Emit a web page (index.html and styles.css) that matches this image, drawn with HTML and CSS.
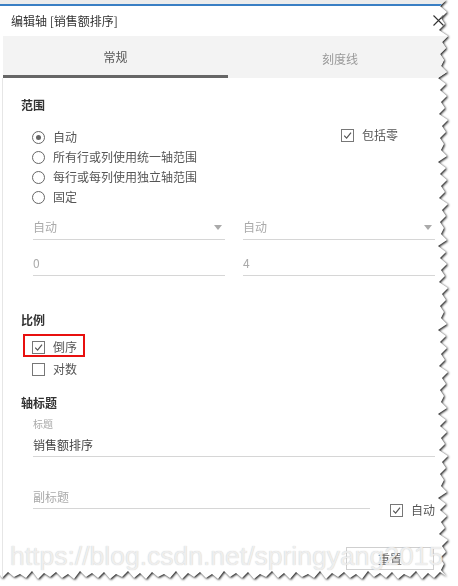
FILE: index.html
```html
<!DOCTYPE html>
<html lang="zh">
<head>
<meta charset="utf-8">
<title>编辑轴</title>
<link rel="stylesheet" href="styles.css">
</head>
<body>
<div class="shadow">
  <div class="dialog">
    <div class="topstrip"></div>
    <div class="titlebar">
      <span class="title">编辑轴 [销售额排序]</span>
      <svg class="close" width="11" height="11" viewBox="0 0 11 11"><path d="M0.5 0.5 L10.5 10.5 M10.5 0.5 L0.5 10.5" stroke="#333" stroke-width="1.1" fill="none"/></svg>
    </div>
    <div class="tabs">
      <div class="tab active">常规</div>
      <div class="tab">刻度线</div>
    </div>
    <div class="content">
      <div class="sec-title s-range">范围</div>
      <div class="range">
        <div class="radios">
          <div class="opt"><span class="radio on"></span>自动</div>
          <div class="opt"><span class="radio"></span>所有行或列使用统一轴范围</div>
          <div class="opt"><span class="radio"></span>每行或每列使用独立轴范围</div>
          <div class="opt"><span class="radio"></span>固定</div>
        </div>
        <div class="opt zero"><span class="cb"><svg width="11" height="11" viewBox="0 0 11 11"><path d="M2.2 5.6 L4.6 8.2 L9 2.6" stroke="#555" stroke-width="1.2" fill="none"/></svg></span>包括零</div>
      </div>
      <div class="fields f-sel">
        <div class="field ph">自动<span class="caret"></span></div>
        <div class="field ph">自动<span class="caret"></span></div>
      </div>
      <div class="fields f-num">
        <div class="field ph">0</div>
        <div class="field ph">4</div>
      </div>
      <div class="sec-title s-scale">比例</div>
      <div class="scale">
        <div class="opt marked"><span class="cb"><svg width="11" height="11" viewBox="0 0 11 11"><path d="M2.2 5.6 L4.6 8.2 L9 2.6" stroke="#555" stroke-width="1.2" fill="none"/></svg></span>倒序</div>
        <div class="opt"><span class="cb"></span>对数</div>
      </div>
      <div class="sec-title s-axis">轴标题</div>
      <div class="small-label">标题</div>
      <div class="field value">销售额排序</div>
      <div class="subrow">
        <div class="field ph sub">副标题</div>
        <div class="opt auto"><span class="cb"><svg width="11" height="11" viewBox="0 0 11 11"><path d="M2.2 5.6 L4.6 8.2 L9 2.6" stroke="#555" stroke-width="1.2" fill="none"/></svg></span>自动</div>
      </div>
      <div class="btnrow"><button class="btn">重置</button></div>
    </div>
  </div>
</div>
<div class="watermark">https://blog.csdn.net/springyang2015</div>
</body>
</html>
```

FILE: styles.css
```css
html, body {
  margin: 0;
  padding: 0;
  background: #fff;
}
body {
  width: 458px;
  height: 586px;
  overflow: hidden;
  position: relative;
  font-family: "Noto Sans CJK SC", "Noto Sans", sans-serif;
  font-size: 12px;
  color: #555;
}
.shadow {
  filter: drop-shadow(1px 1px 1px rgba(0,0,0,0.9));
  width: 458px;
  height: 586px;
}
.dialog {
  width: 452px;
  height: 582px;
  background: #fff;
  overflow: hidden;
  clip-path: polygon(0px 0px, 446px 0px,
    440px 6px, 447px 12px, 441px 18px, 445px 24px, 439px 30px, 448px 36px, 442px 42px, 446px 48px, 440px 54px, 444px 60px,
    441px 66px, 447px 72px, 438px 78px, 446px 84px, 440px 90px, 447px 96px, 441px 102px, 445px 108px, 439px 114px, 448px 120px,
    442px 126px, 446px 132px, 440px 138px, 444px 144px, 441px 150px, 447px 156px, 438px 162px, 446px 168px, 440px 174px, 447px 180px,
    441px 186px, 445px 192px, 439px 198px, 448px 204px, 442px 210px, 446px 216px, 440px 222px, 444px 228px, 441px 234px, 447px 240px,
    438px 246px, 446px 252px, 440px 258px, 447px 264px, 441px 270px, 445px 276px, 439px 282px, 448px 288px, 442px 294px, 446px 300px,
    440px 306px, 444px 312px, 441px 318px, 447px 324px, 438px 330px, 446px 336px, 440px 342px, 447px 348px, 441px 354px, 445px 360px,
    439px 366px, 448px 372px, 442px 378px, 446px 384px, 440px 390px, 444px 396px, 441px 402px, 447px 408px, 438px 414px, 446px 420px,
    440px 426px, 447px 432px, 441px 438px, 445px 444px, 439px 450px, 448px 456px, 442px 462px, 446px 468px, 440px 474px, 444px 480px,
    441px 486px, 447px 492px, 438px 498px, 446px 504px, 440px 510px, 447px 516px, 441px 522px, 445px 528px, 439px 534px, 448px 540px,
    442px 546px, 446px 552px, 440px 558px, 444px 564px, 441px 570px, 446px 576px,
    440px 572px, 434px 578px, 428px 573px, 422px 579px, 416px 571px, 410px 577px, 404px 574px, 398px 579px, 392px 572px, 386px 578px,
    380px 573px, 374px 577px, 368px 571px, 362px 579px, 356px 574px, 350px 578px, 344px 572px, 338px 577px, 332px 573px, 326px 579px,
    320px 571px, 314px 578px, 308px 574px, 302px 577px, 296px 572px, 290px 579px, 284px 573px, 278px 578px, 272px 571px, 266px 577px,
    260px 574px, 254px 579px, 248px 572px, 242px 578px, 236px 573px, 230px 577px, 224px 571px, 218px 579px, 212px 574px, 206px 578px,
    200px 572px, 194px 577px, 188px 573px, 182px 579px, 176px 571px, 170px 578px, 164px 574px, 158px 577px, 152px 572px, 146px 579px,
    140px 573px, 134px 578px, 128px 571px, 122px 577px, 116px 574px, 110px 579px, 104px 572px, 98px 578px, 92px 573px, 86px 577px,
    80px 571px, 74px 579px, 68px 574px, 62px 578px, 56px 572px, 50px 577px, 44px 573px, 38px 579px, 32px 571px, 26px 578px,
    20px 574px, 14px 577px, 8px 572px, 2px 578px, 0px 575px);
}
.topstrip {
  height: 4px;
  background: #ececec;
  border-bottom: 2px solid #3a7fc4;
}
.titlebar {
  height: 30px;
  display: flex;
  align-items: center;
  justify-content: space-between;
  padding: 0 8px 0 11px;
}
.title {
  color: #333;
  font-size: 12px;
  line-height: 30px;
}
.close {
  margin-top: -2px;
}
.tabs {
  display: grid;
  grid-template-columns: 225px 1fr;
  margin-left: 3px;
  height: 42px;
  background: #f3f3f3;
}
.tab {
  box-sizing: border-box;
  height: 42px;
  display: flex;
  align-items: center;
  justify-content: center;
  padding-top: 2px;
  color: #999;
}
.tab.active {
  color: #555;
  border-bottom: 3px solid #666;
}
.content {
  margin-left: 2px;
  border-left: 1px solid #e6e6e6;
  padding: 17px 17px 20px 18px;
}
.sec-title {
  line-height: 20px;
  font-weight: 700;
  color: #333;
}
.range {
  margin-top: 12px;
  display: grid;
  grid-template-columns: 320px 1fr;
  align-items: start;
}
.radios {
  padding-left: 11px;
}
.opt {
  display: flex;
  align-items: center;
  gap: 8px;
  height: 20px;
  line-height: 20px;
  color: #555;
  white-space: nowrap;
}
.zero {
  margin-top: -2px;
}
.radio {
  box-sizing: border-box;
  width: 13px;
  height: 13px;
  border: 1px solid #666;
  border-radius: 50%;
  display: inline-flex;
  align-items: center;
  justify-content: center;
}
.radio.on::after {
  content: "";
  width: 5px;
  height: 5px;
  border-radius: 50%;
  background: #666;
}
.cb {
  box-sizing: border-box;
  width: 13px;
  height: 13px;
  border: 1px solid #777;
  display: inline-flex;
  align-items: center;
  justify-content: center;
  background: #fff;
}
.cb svg {
  display: block;
}
.fields {
  display: grid;
  grid-template-columns: 192px 192px;
  column-gap: 18px;
  padding-left: 12px;
}
.f-sel {
  margin-top: 10px;
}
.f-num {
  margin-top: 13px;
}
.field {
  line-height: 20px;
  padding-bottom: 2px;
  border-bottom: 1px solid #d6d6d6;
  display: flex;
  align-items: center;
  justify-content: space-between;
}
.ph {
  color: #aaa;
}
.caret {
  width: 0;
  height: 0;
  border-left: 4px solid transparent;
  border-right: 4px solid transparent;
  border-top: 5px solid #aaa;
  margin-right: 3px;
}
.s-scale {
  margin-top: 34px;
}
.scale {
  margin-top: 6px;
  padding-left: 11px;
}
.scale .opt {
  height: 22px;
}
.marked {
  position: relative;
  width: fit-content;
}
.marked::after {
  content: "";
  position: absolute;
  left: -9px;
  top: -2px;
  width: 62px;
  height: 23px;
  box-sizing: border-box;
  border: 2px solid #e8100f;
}
.s-axis {
  margin-top: 13px;
}
.small-label {
  margin-top: 4px;
  padding-left: 12px;
  font-size: 10px;
  line-height: 14px;
  color: #aaa;
}
.value {
  margin-top: 4px;
  margin-left: 12px;
  padding-bottom: 1px;
  color: #444;
}
.subrow {
  margin-top: 30px;
  display: flex;
  align-items: flex-start;
}
.sub {
  width: 339px;
  margin-left: 12px;
  padding-bottom: 1px;
}
.auto {
  margin-top: 13px;
  margin-left: 20px;
}
.btnrow {
  margin-top: 27px;
  display: flex;
  justify-content: flex-end;
}
.btn {
  box-sizing: border-box;
  width: 88px;
  height: 23px;
  margin-right: 1px;
  border: 1px solid #cfcfcf;
  background: #fff;
  font-family: "Noto Sans CJK SC", sans-serif;
  font-size: 12px;
  color: #666;
  padding: 0;
}
.watermark {
  position: absolute;
  left: 10px;
  top: 539px;
  font-family: "Liberation Sans", Arial, sans-serif;
  font-size: 26.5px;
  line-height: 34px;
  color: rgba(246,246,246,0.85);
  text-shadow: 0 0 1px rgba(120,120,120,0.45);
  white-space: nowrap;
}
```
